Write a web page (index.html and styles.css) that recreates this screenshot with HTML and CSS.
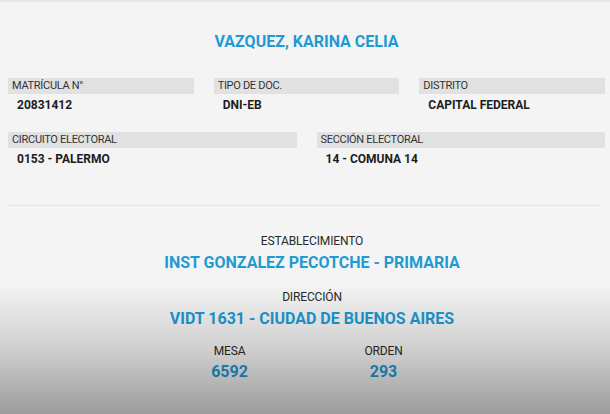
FILE: index.html
```html
<!DOCTYPE html>
<html lang="es">
<head>
    <meta charset="UTF-8">
    <meta name="viewport" content="width=device-width, initial-scale=1.0">
    <title>Padrón - Consulta</title>
    <link rel="stylesheet" href="styles.css">
</head>
<body>
    <!-- Top strip -->
    <div class="top-strip"></div>

    <!-- Main Container -->
    <div class="container">
        <h1 class="voter-name">VAZQUEZ, KARINA CELIA</h1>

        <div class="fields fields-3">
            <div class="field">
                <div class="field-label">MATRÍCULA N°</div>
                <div class="field-value">20831412</div>
            </div>
            <div class="field">
                <div class="field-label">TIPO DE DOC.</div>
                <div class="field-value">DNI-EB</div>
            </div>
            <div class="field">
                <div class="field-label">DISTRITO</div>
                <div class="field-value">CAPITAL FEDERAL</div>
            </div>
        </div>

        <div class="fields fields-2">
            <div class="field">
                <div class="field-label">CIRCUITO ELECTORAL</div>
                <div class="field-value">0153 - PALERMO</div>
            </div>
            <div class="field">
                <div class="field-label">SECCIÓN ELECTORAL</div>
                <div class="field-value">14 - COMUNA 14</div>
            </div>
        </div>

        <hr class="divider">

        <!-- Place Info -->
        <div class="place">
            <div class="place-main">
                <div class="place-label">ESTABLECIMIENTO</div>
                <div class="place-value">INST GONZALEZ PECOTCHE - PRIMARIA</div>

                <div class="place-label spaced">DIRECCIÓN</div>
                <div class="place-value">VIDT 1631 - CIUDAD DE BUENOS AIRES</div>
            </div>

            <div class="place-pair">
                <div class="pair-item">
                    <div class="place-label">MESA</div>
                    <div class="pair-value">6592</div>
                </div>
                <div class="pair-item">
                    <div class="place-label">ORDEN</div>
                    <div class="pair-value">293</div>
                </div>
            </div>
        </div>
    </div>

    <!-- Bottom shade -->
    <div class="bottom-shade"></div>
</body>
</html>
```

FILE: styles.css
```css
/* General Styles */
body {
    background: #f4f4f4;
    color: #222;
    font-family: Roboto, "Noto Sans", Arial, sans-serif;
    margin: 0;
    overflow: hidden;
}

.top-strip {
    height: 2px;
    background: #e9e9e9;
}

/* Container */
.container {
    padding: 30px 5px 0 8px;
}

.voter-name {
    margin: 0 0 26px;
    text-align: center;
    font-size: 16px;
    line-height: 20px;
    font-weight: bold;
    color: #1e9ad4;
}

/* Field Grids */
.fields {
    display: grid;
    column-gap: 20px;
    margin-bottom: 19px;
}

.fields-3 {
    grid-template-columns: repeat(3, 1fr);
}

.fields-2 {
    grid-template-columns: repeat(2, 1fr);
}

.field-label {
    background: #e1e1e1;
    height: 16px;
    line-height: 16px;
    padding-left: 4px;
    font-size: 11px;
    letter-spacing: -0.3px;
    color: #333;
}

.field-value {
    margin-top: 3px;
    padding-left: 9px;
    line-height: 16px;
    font-size: 12px;
    font-weight: bold;
    color: #1c1c1c;
}

/* Divider */
.divider {
    border: none;
    border-top: 1px solid #e3e3e3;
    margin: 38px 5px 0 0;
}

/* Place Info */
.place {
    text-align: center;
    padding-top: 27px;
}

.place-main {
    padding-left: 11px;
}

.place-label {
    font-size: 12px;
    line-height: 16px;
    letter-spacing: -0.15px;
    color: #2a2a2a;
}

.place-label.spaced {
    margin-top: 16px;
}

.place-value {
    margin-top: 4px;
    font-size: 16px;
    line-height: 20px;
    font-weight: bold;
    color: #1e9ad4;
}

.place-pair {
    display: flex;
    justify-content: center;
    margin-top: 14px;
}

.pair-item {
    width: 154px;
}

.pair-value {
    margin-top: 3px;
    font-size: 16px;
    line-height: 20px;
    font-weight: bold;
    color: #1e9ad4;
}

/* Bottom shade over content */
.bottom-shade {
    position: fixed;
    left: 0;
    right: 0;
    bottom: 0;
    height: 130px;
    pointer-events: none;
    background: linear-gradient(to bottom, rgba(0,0,0,0), rgba(0,0,0,0.15) 50%, rgba(0,0,0,0.36));
}
```
